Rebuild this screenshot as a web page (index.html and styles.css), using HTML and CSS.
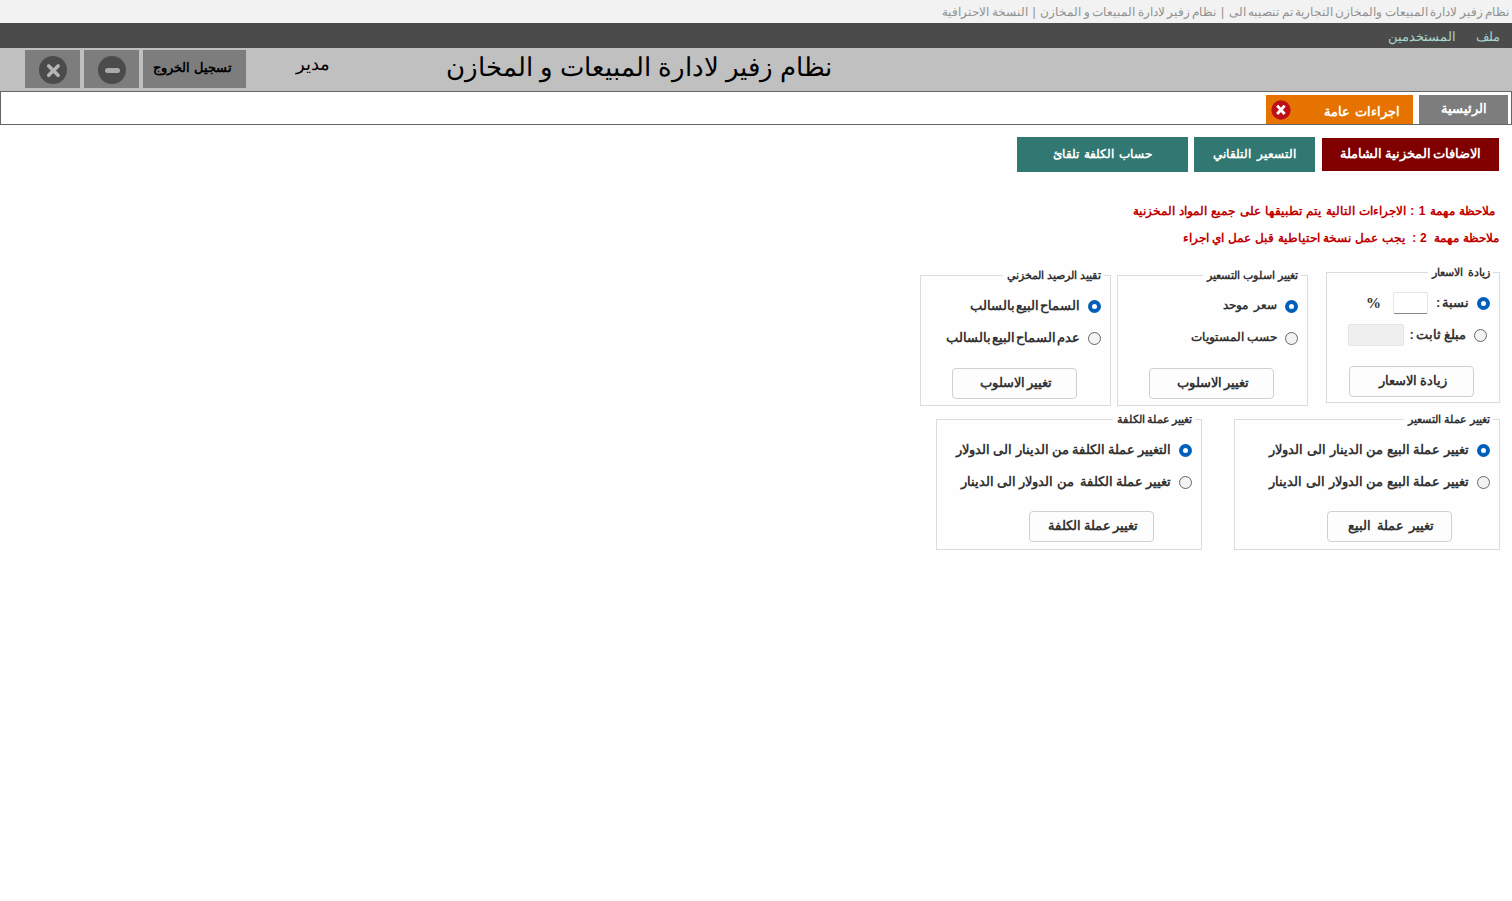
FILE: index.html
```html
<!DOCTYPE html>
<html lang="ar" dir="rtl">
<head>
<meta charset="utf-8">
<title>نظام زفير لادارة المبيعات و المخازن</title>
<link rel="stylesheet" href="styles.css">
</head>
<body>
<div class="titlebar"><span>نظام زفير لادارة المبيعات والمخازن التجارية تم تنصيبه الى &nbsp;|&nbsp; نظام زفير لادارة المبيعات و المخازن &nbsp;|&nbsp; النسخة الاحترافية</span></div>
<nav class="menubar"><span>ملف</span><span>المستخدمين</span></nav>
<header class="header">
  <h1 class="app-name">نظام زفير لادارة المبيعات و المخازن</h1>
  <span class="user">مدير</span>
  <div class="window-buttons">
    <button class="head-btn logout"><span>تسجيل الخروج</span></button>
    <button class="head-btn"><svg width="28" height="28" viewBox="0 0 28 28"><circle cx="14" cy="14" r="14" fill="#4b4b4b"/><path d="M9.5 14.5h10" stroke="#a9a9a9" stroke-width="5" stroke-linecap="round"/></svg></button>
    <button class="head-btn close"><svg width="28" height="28" viewBox="0 0 28 28"><circle cx="14" cy="14" r="14" fill="#4b4b4b"/><path d="M9.7 9.9l9.4 9.4M19.1 9.9l-9.4 9.4" stroke="#b4b4b4" stroke-width="3.6" stroke-linecap="round"/></svg></button>
  </div>
</header>
<div class="tabs">
  <div class="tab home"><span>الرئيسية</span></div>
  <div class="tab active"><span>اجراءات عامة</span><svg width="20" height="20" viewBox="0 0 20 20"><circle cx="10" cy="10" r="9.7" fill="#bd1018"/><path d="M6.2 5.6l7.4 8.4M13.6 5.6l-7.4 8.4" stroke="#fff" stroke-width="2.9"/></svg></div>
</div>
<main class="content">
  <div class="actions">
    <button class="action selected"><span class="t-additions">الاضافات المخزنية الشاملة</span></button>
    <button class="action pricing"><span class="t-pricing">التسعير التلقاني</span></button>
    <button class="action cost"><span class="t-cost">حساب الكلفة تلقائ</span></button>
  </div>
  <p class="note first">ملاحظة مهمة 1 : الاجراءات التالية يتم تطبيقها على جميع المواد المخزنية</p>
  <p class="note second">ملاحظة مهمة &nbsp;2 : &nbsp;يجب عمل نسخة احتياطية قبل عمل اي اجراء</p>
  <div class="row upper">
    <section class="group increase">
      <div class="legend">زيادة الاسعار</div>
      <label class="option"><i class="radio on"></i><span class="t-ratio">نسبة :</span><i class="field ratio"></i><b class="percent">%</b></label>
      <label class="option inset"><i class="radio"></i><span class="t-fixed">مبلغ ثابت :</span><i class="field amount"></i></label>
      <button class="apply">زيادة الاسعار</button>
    </section>
    <section class="group method">
      <div class="legend">تغيير اسلوب التسعير</div>
      <label class="option"><i class="radio on"></i><span class="t-unified">سعر موحد</span></label>
      <label class="option"><i class="radio"></i><span class="t-levels">حسب المستويات</span></label>
      <button class="apply">تغيير الاسلوب</button>
    </section>
    <section class="group balance">
      <div class="legend">تقييد الرصيد المخزني</div>
      <label class="option"><i class="radio on"></i><span class="t-balance">السماح البيع بالسالب</span></label>
      <label class="option"><i class="radio"></i><span class="t-balance">عدم السماح البيع بالسالب</span></label>
      <button class="apply">تغيير الاسلوب</button>
    </section>
  </div>
  <div class="row lower">
    <section class="group sale">
      <div class="legend">تغيير عملة التسعير</div>
      <label class="option"><i class="radio on"></i><span>تغيير عملة البيع من الدينار الى الدولار</span></label>
      <label class="option"><i class="radio"></i><span>تغيير عملة البيع من الدولار الى الدينار</span></label>
      <button class="apply">تغيير عملة البيع</button>
    </section>
    <section class="group costs">
      <div class="legend">تغيير عملة الكلفة</div>
      <label class="option"><i class="radio on"></i><span class="t-costs">التغيير عملة الكلفة من الدينار الى الدولار</span></label>
      <label class="option"><i class="radio"></i><span class="t-costs">تغيير عملة الكلفة &nbsp;من الدولار الى الدينار</span></label>
      <button class="apply">تغيير عملة الكلفة</button>
    </section>
  </div>
</main>
</body>
</html>
```
FILE: styles.css
```css
* { box-sizing: border-box; }
body { margin: 0; height: 901px; overflow: hidden; background: #fefefe; font-family: "Liberation Sans", sans-serif; white-space: nowrap; color: #333; }
button { border: 0; padding: 0; font: inherit; color: inherit; display: flex; align-items: center; justify-content: center; }
svg { display: block; }

.titlebar { height: 23px; background: #f2f2f2; color: #919191; font-size: 12px; word-spacing: -0.95px; line-height: 24px; padding-right: 3px; }
.menubar { height: 25px; background: #4b4b4b; color: #a9d5cf; font-size: 13px; line-height: 27px; display: flex; gap: 20px; padding-right: 12px; }

.header { height: 43px; background: #c0c0c0; color: #000; display: flex; align-items: flex-start; padding: 2px 680px 0 25px; }
.app-name { margin: 0; font-size: 26px; font-weight: 400; word-spacing: -0.3px; line-height: 34px; }
.user { font-size: 18px; line-height: 29px; margin-right: 116px; }
.window-buttons { display: flex; gap: 4px; margin-right: auto; }
.head-btn { width: 55px; height: 38px; background: #7d7d7d; padding: 2px 0 0 0; }
.logout { width: 103px; font-size: 13px; font-weight: 700; padding: 0 4px 3px 0; }
.close { padding-left: 1px; }

.tabs { height: 34px; background: #fff; border: 1px solid #666; display: flex; gap: 6px; padding: 3px 3px 0 0; color: #fff; font-weight: 700; }
.tab { height: 29px; font-size: 13px; }
.home { width: 89px; background: #7d7d7d; line-height: 27px; padding-right: 21px; }
.active { width: 147px; background: #e67300; word-spacing: 1px; line-height: 33px; display: flex; justify-content: space-between; padding: 0 13px 0 5px; }
.active svg { margin-top: 5px; }

.content { padding: 12px 12px 0 0; }
.actions { display: flex; align-items: center; color: #fff; font-weight: 700; padding-right: 1px; height: 35px; }
.action { height: 35px; background: #317873; padding-bottom: 2px; }
.selected { width: 177px; height: 33px; background: #800000; }
.pricing { width: 121px; margin-right: 7px; }
.cost { width: 171px; margin-right: 6px; }
.t-additions { font-size: 13px; word-spacing: -1.5px; }
.t-pricing { font-size: 12px; word-spacing: 3px; }
.t-cost { font-size: 12px; word-spacing: 1.5px; }

.note { margin: 0; color: #c00000; font-size: 12px; font-weight: 700; line-height: 27px; }
.first { word-spacing: 1px; margin-top: 26px; padding-right: 5px; }
.second { word-spacing: 0.4px; padding-right: 1px; }

.row { display: flex; align-items: flex-start; }
.upper { margin-top: 20px; height: 147px; }
.group { border: 1px solid #dcdcdc; height: 131px; width: 191px; display: flex; flex-direction: column; align-items: flex-start; padding-right: 9px; }
.legend { height: 16px; line-height: 14px; margin: -8px -3px 6px 0; padding: 0 3px 0 4px; background: #fefefe; font-size: 11px; font-weight: 700; }
.increase { width: 174px; }
.increase .legend { word-spacing: 2px; }
.method { margin: 3px 18px 0 0; }
.balance { margin: 3px 6px 0 0; }
.sale, .costs { width: 266px; }
.costs { margin-right: 32px; }
.costs .legend { word-spacing: -1px; }

.option { height: 32px; display: flex; align-items: center; gap: 8px; font-weight: 700; font-size: 13px; }
.option span { padding-bottom: 2px; }
.inset { padding-right: 3px; gap: 5px; }
.inset .radio { margin-left: 3px; }
.radio { width: 13px; height: 13px; border-radius: 50%; border: 1px solid #666; background: #f3f3f3; }
.radio.on { border: 4px solid #005fb8; background: #fff; }
.field { height: 22px; border: 1px solid #e5e5e5; border-radius: 2px; }
.ratio { width: 35px; background: #fff; border-bottom-color: #868686; margin-left: 4px; }
.amount { width: 56px; background: #f0f0f0; }
.percent { font: 700 15px "Liberation Serif", serif; }
.t-ratio { word-spacing: -2px; }
.t-fixed { word-spacing: -1px; }
.t-unified { font-size: 12px; word-spacing: 3px; }
.t-levels { font-size: 12px; }
.t-balance { word-spacing: -2.5px; }
.t-costs { word-spacing: -0.5px; }

.apply { width: 125px; height: 31px; border: 1px solid #d0d0d0; border-radius: 4px; background: #fdfdfd; font-size: 13px; word-spacing: -1px; font-weight: 700; margin: 14px 24px 0 0; padding: 0 0 2px 3px; }
.increase .apply { margin: 15px 16px 0 0; }
.sale .apply, .costs .apply { margin: 13px 38px 0 0; }
.sale .apply { word-spacing: 1.5px; }
```
